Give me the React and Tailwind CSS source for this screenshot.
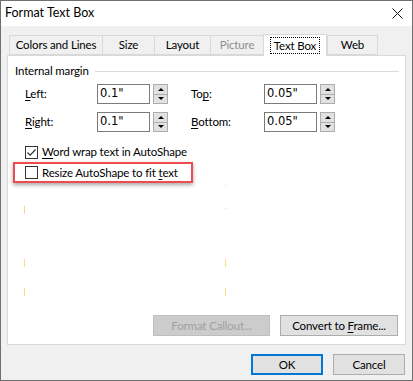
import React from 'react';

const font = { fontFamily: 'Lato, "Noto Sans", sans-serif' };

function U({ children }) {
  return <span className="underline underline-offset-2 decoration-1">{children}</span>;
}

function Spin({ value }) {
  return (
    <div className="flex items-center gap-[3px]">
      <div className="w-[53px] h-[20px] border border-[#7a7a7a] bg-white flex items-center pl-[2px] text-black tracking-normal" style={{ fontFamily: 'Tahoma, "DejaVu Sans", sans-serif' }}>
        <span className="text-[11.5px]">{value}</span>
      </div>
      <div className="w-[15px] h-[20px] border border-[#adadad] bg-[#e1e1e1] flex flex-col">
        <div className="flex-1 flex items-center justify-center border-b border-[#adadad]">
          <div className="w-0 h-0 border-l-[3px] border-r-[3px] border-b-[3px] border-l-transparent border-r-transparent border-b-black" />
        </div>
        <div className="flex-1 flex items-center justify-center">
          <div className="w-0 h-0 border-l-[3px] border-r-[3px] border-t-[3px] border-l-transparent border-r-transparent border-t-black" />
        </div>
      </div>
    </div>
  );
}

function Check({ checked }) {
  return (
    <div className="w-[13px] h-[13px] shrink-0 border border-[#333] bg-white flex items-center justify-center">
      {checked && (
        <svg width="11" height="11" viewBox="0 0 11 11">
          <path d="M1.5 5.5 L4.2 8.2 L9.5 2.5" fill="none" stroke="#333" strokeWidth="1.2" />
        </svg>
      )}
    </div>
  );
}

const tabs = [
  { label: 'Colors and Lines', w: 'w-[93px]' },
  { label: 'Size', w: 'w-[52px]' },
  { label: 'Layout', w: 'w-[56px]' },
  { label: 'Picture', w: 'w-[53px]', disabled: true },
  { label: 'Text Box', w: 'w-[64px]', active: true },
  { label: 'Web', w: 'w-[51px]' },
];

function Mark() {
  return <div className="w-px h-[8px] bg-[#ffd98a]" />;
}

export default function App() {
  return (
    <div className="w-[413px] h-[381px] border border-[#6f6f6f] bg-[#f0f0f0] flex flex-col text-[11.5px] tracking-[-0.15px] text-black whitespace-nowrap" style={font}>
      {/* title bar */}
      <div className="h-[25px] bg-white flex items-center justify-between pl-[4px] pr-[9px]">
        <span className="text-[12.5px] tracking-normal">Format Text Box</span>
        <svg width="11" height="11" viewBox="0 0 11 11">
          <path d="M0.5 0.5 L10.5 10.5 M10.5 0.5 L0.5 10.5" stroke="#111" strokeWidth="1" />
        </svg>
      </div>

      {/* tabs */}
      <div className="flex items-end pl-[8px] mt-[7px] h-[22px] relative z-10">
        {tabs.map((t) => (
          <div
            key={t.label}
            className={
              t.active
                ? `${t.w} h-[22px] bg-white border border-b-0 border-[#d9d9d9] flex items-center justify-center -mb-px`
                : `${t.w} h-[20px] bg-[#f0f0f0] border border-[#d9d9d9] border-r-0 last:border-r flex items-center justify-center`
            }
          >
            <span
              className={
                (t.active ? 'outline-1 outline-dotted outline-black px-[3px] leading-[15px] ' : '') +
                (t.disabled ? 'text-[#8d8d8d]' : 'text-black')
              }
            >
              {t.label}
            </span>
          </div>
        ))}
      </div>

      {/* panel */}
      <div className="mx-[6px] h-[290px] bg-white border border-[#d9d9d9] flex flex-col">
        <div className="flex items-center mt-[7px] pl-[7px] mr-[6px] h-[16px]">
          <span>Internal margin</span>
          <div className="flex-1 h-px bg-[#dcdcdc] ml-[6px]" />
        </div>

        <div className="mt-[5px] pl-[17px] flex flex-col gap-[8px]">
          <div className="flex items-center">
            <span className="w-[72px]"><U>L</U>eft:</span>
            <Spin value={'0.1"'} />
            <span className="w-[73px] ml-[23px]">To<U>p</U>:</span>
            <Spin value={'0.05"'} />
          </div>
          <div className="flex items-center">
            <span className="w-[72px]"><U>R</U>ight:</span>
            <Spin value={'0.1"'} />
            <span className="w-[73px] ml-[23px]"><U>B</U>ottom:</span>
            <Spin value={'0.05"'} />
          </div>
        </div>

        <div className="mt-[12px] pl-[17px] flex items-center gap-[4px] h-[16px]">
          <Check checked />
          <span><U>W</U>ord wrap text in AutoShape</span>
        </div>
        <div className="ml-[5px] mt-[2px] w-[180px] h-[21px] border-2 border-[#ef4a4f] flex items-center gap-[4px] pl-[10px] shadow-[0_2px_4px_rgba(0,0,0,0.35)]">
          <Check />
          <span>Resize AutoShape to fit <U>t</U>ext</span>
        </div>

        {/* faint artifacts */}
        <div className="flex mt-[2px] pl-[16px] gap-[200px]">
          <div className="flex flex-col">
            <div className="h-[21px]" />
            <Mark />
          </div>
          <div className="flex flex-col">
            <div className="w-px h-px bg-[#ffd98a]" />
            <div className="h-[22px]" />
            <div className="w-px h-px bg-[#ffd98a]" />
          </div>
        </div>
        <div className="flex pl-[16px] mt-[45px] gap-[200px]">
          <div className="flex flex-col gap-[21px]"><Mark /><Mark /></div>
          <div className="flex flex-col gap-[21px]"><Mark /><Mark /></div>
        </div>

        <div className="mt-auto mb-[8px] mr-[7px] flex justify-end gap-[10px]">
          <div className="w-[117px] h-[21px] bg-[#cccccc] border border-[#bfbfbf] flex items-center justify-center text-[#a0a0a0]">
            Format Callout...
          </div>
          <div className="w-[118px] h-[21px] bg-[#e1e1e1] border border-[#adadad] flex items-center justify-center">
            <span>Convert to <U>F</U>rame...</span>
          </div>
        </div>
      </div>

      {/* bottom buttons */}
      <div className="mt-[9px] mr-[7px] flex justify-end gap-[10px]">
        <div className="w-[72px] h-[21px] bg-[#e1e1e1] border-2 border-[#0078d7] flex items-center justify-center">OK</div>
        <div className="w-[72px] h-[21px] bg-[#e1e1e1] border border-[#adadad] flex items-center justify-center">Cancel</div>
      </div>
    </div>
  );
}
